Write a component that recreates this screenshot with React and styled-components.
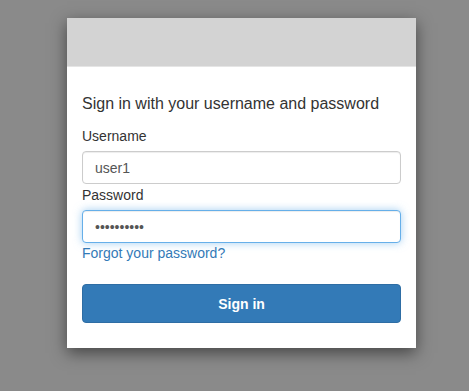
import styled, { createGlobalStyle } from "styled-components";

const GlobalStyle = createGlobalStyle`
  html, body {
    margin: 0;
    padding: 0;
    background-color: #8a8a8a;
    font-family: "Liberation Sans", Arial, sans-serif;
  }
  * {
    box-sizing: border-box;
  }
`;

function App() {
  return (
    <>
      <GlobalStyle />
      <Page>
        <Card>
          <Banner />
          <Body>
            <Heading>Sign in with your username and password</Heading>
            <form onSubmit={(e) => e.preventDefault()}>
              <Label htmlFor="signInFormUsername">Username</Label>
              <Field
                id="signInFormUsername"
                type="text"
                defaultValue="user1"
              />
              <Label htmlFor="signInFormPassword">Password</Label>
              <Field
                id="signInFormPassword"
                type="password"
                defaultValue="password12"
                $focused
                autoFocus
              />
              <ForgotLink href="#">Forgot your password?</ForgotLink>
              <SubmitButton type="submit">Sign in</SubmitButton>
            </form>
          </Body>
        </Card>
      </Page>
    </>
  );
}

export default App;

const Page = styled.div`
  padding-top: 18px;
  padding-left: 67px;
  min-height: 391px;
`;

const Card = styled.div`
  width: 349px;
  background-color: #fff;
  box-shadow: 0 5px 15px rgba(0, 0, 0, 0.5);
`;

const Banner = styled.div`
  height: 49px;
  background-color: #d3d3d3;
  border-bottom: 1px solid #e5e5e5;
`;

const Body = styled.div`
  padding: 27px 15px 25px;
`;

const Heading = styled.h4`
  margin: 0 0 12px;
  font-size: 16px;
  font-weight: normal;
  line-height: 20px;
  color: #333;
`;

const Label = styled.label`
  display: block;
  margin-bottom: 5px;
  font-size: 14px;
  line-height: 20px;
  color: #333;
`;

const Field = styled.input`
  display: block;
  width: 100%;
  height: 33px;
  padding: 6px 12px;
  margin: 0 0 1px;
  font-family: inherit;
  font-size: 14px;
  color: #555;
  background-color: #fff;
  border: 1px solid ${(p) => (p.$focused ? "#66afe9" : "#ccc")};
  border-radius: 4px;
  caret-color: #333;
  box-shadow: ${(p) =>
    p.$focused
      ? "inset 0 1px 1px rgba(0,0,0,.075), 0 0 8px rgba(102,175,233,.6)"
      : "inset 0 1px 1px rgba(0,0,0,.075)"};
  outline: none;
`;

const ForgotLink = styled.a`
  display: block;
  margin-top: -1px;
  font-size: 14px;
  line-height: 20px;
  color: #337ab7;
  text-decoration: none;
`;

const SubmitButton = styled.button`
  display: block;
  width: 100%;
  height: 39px;
  margin-top: 21px;
  font-family: inherit;
  font-size: 14px;
  font-weight: bold;
  color: #fff;
  background-color: #337ab7;
  border: 1px solid #2e6da4;
  border-radius: 4px;
  cursor: pointer;
`;
